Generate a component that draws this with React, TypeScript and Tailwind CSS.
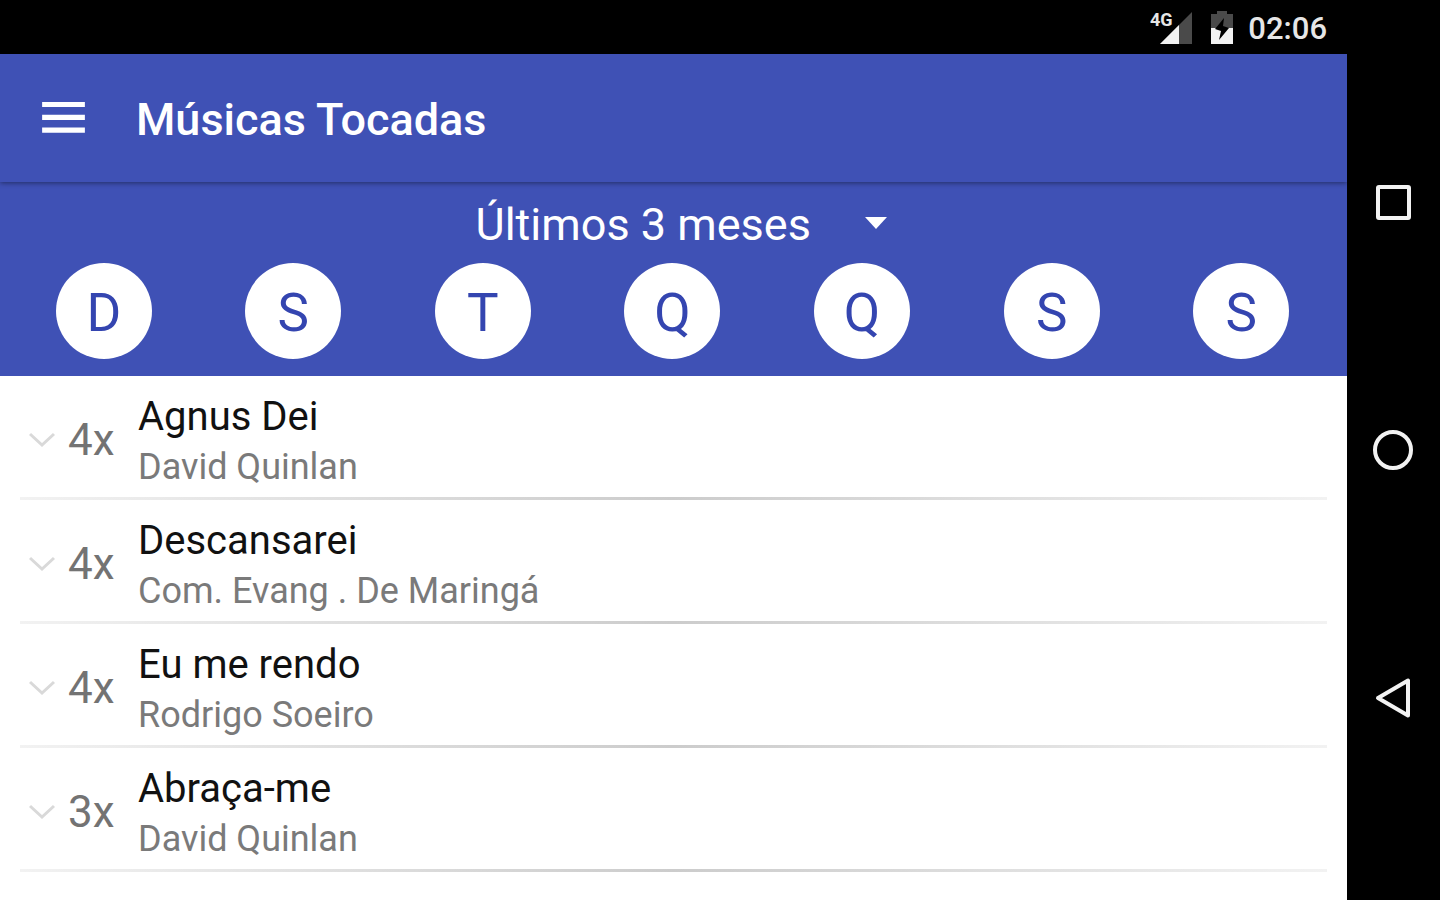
import { useState } from "react";

const DAYS = [
  { label: "D", name: "Domingo" },
  { label: "S", name: "Segunda" },
  { label: "T", name: "Terça" },
  { label: "Q", name: "Quarta" },
  { label: "Q", name: "Quinta" },
  { label: "S", name: "Sexta" },
  { label: "S", name: "Sábado" },
];

const PERIODS = ["Último mês", "Últimos 3 meses", "Último ano"];

const SONGS = [
  { title: "Agnus Dei", artist: "David Quinlan", count: 4 },
  { title: "Descansarei", artist: "Com. Evang . De Maringá", count: 4 },
  { title: "Eu me rendo", artist: "Rodrigo Soeiro", count: 4 },
  { title: "Abraça-me", artist: "David Quinlan", count: 3 },
];

function StatusBar() {
  return (
    <div className="flex h-[54px] items-center justify-end bg-black pr-5 text-[#e6e6e6]">
      {/* Signal */}
      <svg width="44" height="36" viewBox="0 0 44 36" className="mr-4">
        <path d="M42 3V35H10Z" fill="#4a4a4a" />
        <path d="M29 16V35H10Z" fill="#f2f2f2" />
        <text x="0" y="17" fontSize="18" fontWeight="700" fill="#e6e6e6" stroke="#000" strokeWidth="3" paintOrder="stroke">
          4G
        </text>
      </svg>
      {/* Battery */}
      <svg width="24" height="36" viewBox="0 0 24 36" className="mr-[14px]">
        <path d="M7 2H17V5H23V19H1V5H7Z" fill="#4a4a4a" />
        <path d="M1 19H23V35H1Z" fill="#f2f2f2" />
        <path d="M14 9L13 17L19 19L9 31L11 22L5 20Z" fill="#000" />
      </svg>
      <span className="pt-1 text-[31px] leading-[40px] font-medium">02:06</span>
    </div>
  );
}

function NavigationBar() {
  return (
    <nav className="flex w-[93px] shrink-0 flex-col bg-black py-[79px]">
      <button aria-label="Recentes" className="flex flex-1 items-center justify-center">
        <svg width="44" height="44" viewBox="0 0 44 44" fill="none" stroke="#f2f2f2" strokeWidth="4">
          <rect x="6" y="6" width="31" height="31" rx="1" />
        </svg>
      </button>
      <button aria-label="Início" className="flex flex-1 items-center justify-center">
        <svg width="44" height="44" viewBox="0 0 44 44" fill="none" stroke="#f2f2f2" strokeWidth="4">
          <circle cx="21" cy="22" r="18" />
        </svg>
      </button>
      <button aria-label="Voltar" className="flex flex-1 items-center justify-center">
        <svg width="44" height="44" viewBox="0 0 44 44" fill="none" stroke="#f2f2f2" strokeWidth="4" strokeLinejoin="round">
          <path d="M6 23L36 5.500V40.500Z" />
        </svg>
      </button>
    </nav>
  );
}

export default function App() {
  const [period, setPeriod] = useState("Últimos 3 meses");
  const [activeDays, setActiveDays] = useState(DAYS.map(() => true));

  const toggleDay = (index: number) => {
    setActiveDays(activeDays.map((on, i) => (i === index ? !on : on)));
  };

  return (
    <div className="flex min-h-screen bg-white font-['Roboto',sans-serif]">
      <main className="flex min-w-0 flex-1 flex-col">
        <StatusBar />

        {/* App bar */}
        <header className="relative flex h-32 items-center bg-[#3f51b5] pl-[35px] text-white shadow-[0_1px_5px_rgba(0,0,0,0.45)]">
          <button aria-label="Abrir menu">
            <svg width="57" height="57" viewBox="0 0 24 24" fill="currentColor">
              <path d="M3 18h18v-2.200H3V18zm0-5.400h18v-2.200H3v2.200zM3 5v2.200h18V5H3z" />
            </svg>
          </button>
          <h1 className="ml-11 pt-1 text-[45px] leading-[60px] font-medium">Músicas Tocadas</h1>
        </header>

        {/* Filters */}
        <section className="bg-[#3f51b5] pt-[13px] pr-[11px] pb-[17px] pl-[9px]">
          <div className="flex justify-center">
            <div className="relative text-white">
              <select
                aria-label="Período"
                value={period}
                onChange={(e) => setPeriod(e.target.value)}
                className="h-[60px] appearance-none bg-transparent pr-[76px] pl-[18px] text-[45px] leading-[60px] outline-none"
              >
                {PERIODS.map((p) => (
                  <option key={p} value={p} className="text-black">
                    {p}
                  </option>
                ))}
              </select>
              <svg
                width="24"
                height="12"
                viewBox="0 0 24 12"
                fill="currentColor"
                className="pointer-events-none absolute top-[22px] right-0"
              >
                <path d="M1 0H23L12 12Z" />
              </svg>
            </div>
          </div>
          <div className="mt-2 grid grid-cols-7 justify-items-center">
            {DAYS.map((day, i) => (
              <button
                key={day.name}
                aria-label={day.name}
                aria-pressed={activeDays[i]}
                onClick={() => toggleDay(i)}
                className={`size-24 rounded-full pt-1 text-[53px] leading-[92px] ${
                  activeDays[i] ? "bg-white text-[#3445b0]" : "bg-transparent text-white"
                }`}
              >
                {day.label}
              </button>
            ))}
          </div>
        </section>

        {/* Songs */}
        <ul>
          {SONGS.map((song) => (
            <li key={song.title}>
              <div className="flex items-center pt-3 pr-5 pb-[5px] pl-[29px]">
                <button aria-label={`Detalhes de ${song.title}`}>
                  <svg width="26" height="16" viewBox="0 0 26 16" fill="none" stroke="#d9d9d9" strokeWidth="3">
                    <path d="M1 2L13 13L25 2" />
                  </svg>
                </button>
                <span className="ml-[13px] w-[70px] text-[44px] leading-[60px] text-[#737373]">{song.count}x</span>
                <div className="min-w-0 pt-1">
                  <h2 className="truncate text-[40px] leading-[50px] text-[#111111]">{song.title}</h2>
                  <p className="truncate text-[36px] leading-[50px] text-[#7a7a7a]">{song.artist}</p>
                </div>
              </div>
              <div className="mx-5 h-[3px] bg-linear-to-r from-[#f2f2f2] via-[#cccccc] to-[#f2f2f2]" />
            </li>
          ))}
        </ul>
      </main>
      <NavigationBar />
    </div>
  );
}
